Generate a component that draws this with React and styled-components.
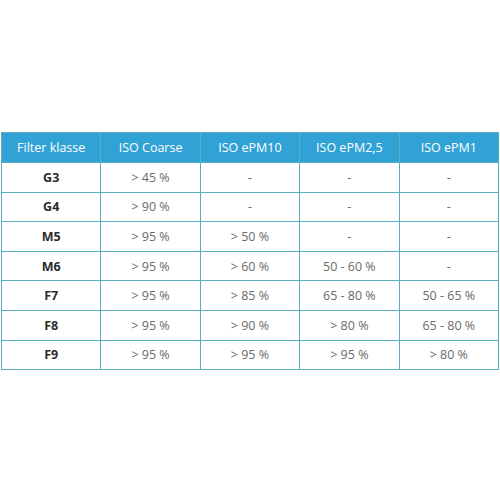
import React from "react"
import styled, { createGlobalStyle } from "styled-components"

const GlobalStyle = createGlobalStyle`
  html, body {
    margin: 0;
    padding: 0;
    background: #ffffff;
  }
  body {
    font-family: "Open Sans", "Liberation Sans", sans-serif;
  }
`

const Page = styled.div`
  width: 500px;
  height: 500px;
  padding: 132px 0 0 1px;
  box-sizing: border-box;
`

const Table = styled.table`
  width: 498px;
  border-collapse: collapse;
  table-layout: fixed;
  border: 1px solid #5aafc0;
`

const HeadCell = styled.th`
  height: 29px;
  padding: 0;
  background: #31a2d6;
  color: #ffffff;
  font-size: 12.5px;
  font-weight: 400;
  text-align: center;
  border-left: 1px solid #5aafc0;
  border-right: 1px solid #5aafc0;
`

const Cell = styled.td`
  height: 28.6px;
  padding: 0;
  text-align: center;
  font-size: 12.5px;
  color: ${({ $label }) => ($label ? "#2b2b2b" : "#6a6a6a")};
  font-weight: ${({ $label }) => ($label ? 700 : 400)};
  border: 1px solid #5aafc0;
`

const columns = ["Filter klasse", "ISO Coarse", "ISO ePM10", "ISO ePM2,5", "ISO ePM1"]

const rows = [
  ["G3", "> 45 %", "-", "-", "-"],
  ["G4", "> 90 %", "-", "-", "-"],
  ["M5", "> 95 %", "> 50 %", "-", "-"],
  ["M6", "> 95 %", "> 60 %", "50 - 60 %", "-"],
  ["F7", "> 95 %", "> 85 %", "65 - 80 %", "50 - 65 %"],
  ["F8", "> 95 %", "> 90 %", "> 80 %", "65 - 80 %"],
  ["F9", "> 95 %", "> 95 %", "> 95 %", "> 80 %"],
]

const App = () => {
  return (
    <>
      <GlobalStyle />
      <Page>
        <Table>
          <thead>
            <tr>
              {columns.map((c) => (
                <HeadCell key={c}>{c}</HeadCell>
              ))}
            </tr>
          </thead>
          <tbody>
            {rows.map((r) => (
              <tr key={r[0]}>
                {r.map((v, i) => (
                  <Cell key={i} $label={i === 0}>
                    {v}
                  </Cell>
                ))}
              </tr>
            ))}
          </tbody>
        </Table>
      </Page>
    </>
  )
}

export default App
